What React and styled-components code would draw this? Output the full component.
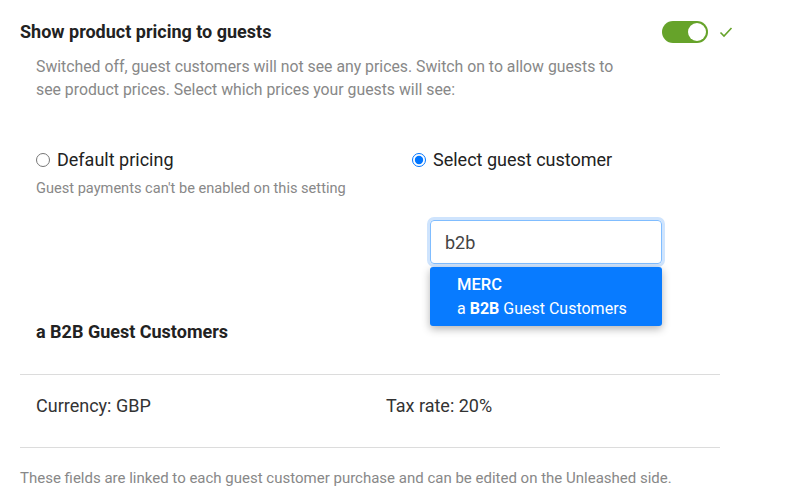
import React from 'react';
import styled, { createGlobalStyle } from 'styled-components';

const GlobalStyle = createGlobalStyle`
  body {
    margin: 0;
    background: #fff;
    font-family: Roboto, "Noto Sans", sans-serif;
    color: #222;
  }
`;

const Page = styled.div`
  padding: 19px 0 0 20px;
  width: 700px;
`;

const Header = styled.div`
  display: flex;
  align-items: center;
  width: 713px;
`;

const Title = styled.h2`
  flex: 1;
  margin: 0;
  font-size: 18px;
  font-weight: 700;
  line-height: 26px;
  color: #222;
`;

const Toggle = styled.div`
  width: 46px;
  height: 22px;
  border-radius: 11px;
  background: #66a32a;
  position: relative;
  &::after {
    content: '';
    position: absolute;
    right: 2px;
    top: 2px;
    width: 18px;
    height: 18px;
    border-radius: 50%;
    background: #fff;
  }
`;

const Check = styled.svg`
  margin-left: 11px;
  width: 14px;
  height: 14px;
`;

const Description = styled.p`
  margin: 10px 0 0 16px;
  width: 590px;
  font-size: 15.8px;
  line-height: 23px;
  color: #888;
`;

const Options = styled.div`
  display: grid;
  grid-template-columns: 376px 1fr;
  margin: 48px 0 0 16px;
`;

const Option = styled.div`
  display: flex;
  flex-direction: column;
`;

const RadioLabel = styled.label`
  display: flex;
  align-items: center;
  gap: 7px;
  font-size: 18px;
  line-height: 22px;
  color: #222;
`;

const Radio = styled.input.attrs({ type: 'radio' })`
  margin: 0;
  width: 14px;
  height: 14px;
  flex-shrink: 0;
`;

const Hint = styled.div`
  margin-top: 8px;
  font-size: 14.6px;
  line-height: 18px;
  color: #888;
`;

const SearchWrap = styled.div`
  position: relative;
  margin: 49px 0 0 18px;
  width: 232px;
`;

const SearchInput = styled.div`
  height: 44px;
  box-sizing: border-box;
  border: 1px solid #80bdff;
  box-shadow: 0 0 0 3px #cfe4fd;
  border-radius: 4px;
  padding: 0 14px;
  display: flex;
  align-items: center;
  font-size: 18px;
  color: #444;
`;

const Menu = styled.div`
  position: absolute;
  left: 0;
  top: 47px;
  width: 232px;
  box-sizing: border-box;
  padding: 7px 27px 7px;
  background: #087bff;
  border-radius: 3px;
  box-shadow: 0 3px 8px rgba(0, 0, 0, 0.3);
  color: #fff;
`;

const MenuTitle = styled.div`
  font-size: 16.5px;
  line-height: 22px;
  font-weight: 500;
`;

const MenuSub = styled.div`
  margin-top: 3px;
  font-size: 16px;
  line-height: 20px;
  b {
    font-weight: 700;
  }
`;

const CustomerName = styled.h3`
  margin: 57px 0 0 16px;
  font-size: 18px;
  font-weight: 700;
  line-height: 22px;
  color: #222;
`;

const Divider = styled.hr`
  margin: ${p => p.top}px 0 0;
  border: none;
  border-top: 1px solid #dcdcdc;
`;

const DetailRow = styled.div`
  display: grid;
  grid-template-columns: 350px 1fr;
  padding: 20px 16px 0;
  height: 72px;
  box-sizing: border-box;
  font-size: 18px;
  line-height: 22px;
  color: #333;
`;

const Footer = styled.p`
  margin: 20px 0 0;
  font-size: 15px;
  line-height: 20px;
  color: #888;
  white-space: nowrap;
`;

export default function App() {
  return (
    <>
      <GlobalStyle />
      <Page>
        <Header>
          <Title>Show product pricing to guests</Title>
          <Toggle />
          <Check viewBox="0 0 14 14">
            <path d="M1.5 7.5 L5 11 L12.5 3" fill="none" stroke="#66a32a" strokeWidth="1.6" />
          </Check>
        </Header>
        <Description>
          Switched off, guest customers will not see any prices. Switch on to allow guests to
          see product prices. Select which prices your guests will see:
        </Description>
        <Options>
          <Option>
            <RadioLabel>
              <Radio name="pricing" readOnly />
              Default pricing
            </RadioLabel>
            <Hint>Guest payments can't be enabled on this setting</Hint>
          </Option>
          <Option>
            <RadioLabel>
              <Radio name="pricing" defaultChecked />
              Select guest customer
            </RadioLabel>
            <SearchWrap>
              <SearchInput>b2b</SearchInput>
              <Menu>
                <MenuTitle>MERC</MenuTitle>
                <MenuSub>
                  a <b>B2B</b> Guest Customers
                </MenuSub>
              </Menu>
            </SearchWrap>
          </Option>
        </Options>
        <CustomerName>a B2B Guest Customers</CustomerName>
        <Divider top={31} />
        <DetailRow>
          <span>Currency: GBP</span>
          <span>Tax rate: 20%</span>
        </DetailRow>
        <Divider top={0} />
        <Footer>
          These fields are linked to each guest customer purchase and can be edited on the Unleashed side.
        </Footer>
      </Page>
    </>
  );
}
